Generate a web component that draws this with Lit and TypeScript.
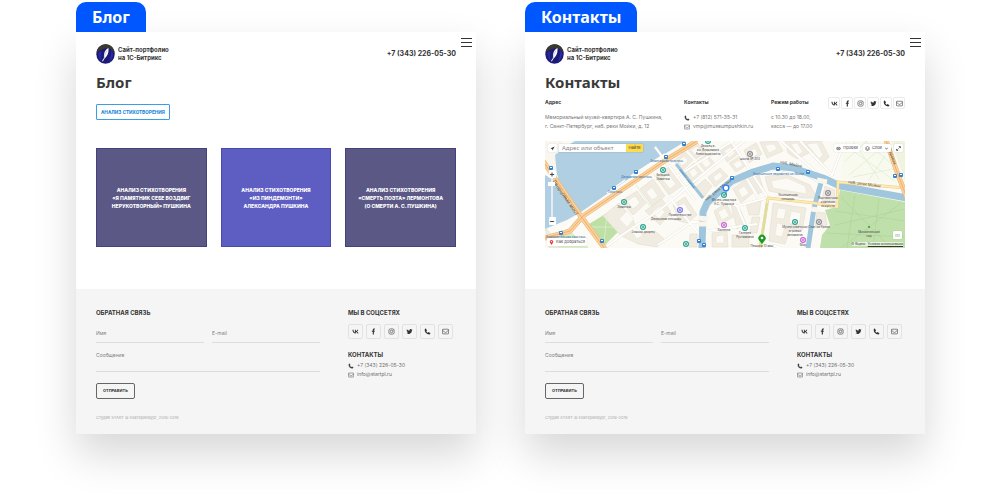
import { LitElement, html, svg, css } from "lit";
import { customElement, property } from "lit/decorators.js";

const glyphs: Record<string, unknown> = {
  vk: svg`<path fill="currentColor" d="M8.6 12.4C3.9 12.4 1.1 9.2 1 3.8h2.4c.1 4 1.8 5.600 3.200 6V3.800h2.200v3.400c1.400-.1 2.800-1.700 3.300-3.400h2.200c-.4 2-1.900 3.600-3 4.200 1.100.500 2.900 1.900 3.600 4.400h-2.500c-.5-1.600-1.800-2.800-3.600-3v3z"/>`,
  facebook: svg`<path fill="currentColor" d="M6.300 15V8.700H4.200V6.200h2.100V4.300C6.300 2.200 7.500 1 9.500 1c.9 0 1.800.1 1.800.1v2.200h-1.100c-1 0-1.300.6-1.300 1.300v1.600h2.300l-.4 2.500H8.900V15z"/>`,
  instagram: svg`<g fill="none" stroke="currentColor" stroke-width="1.300"><rect x="2" y="2" width="12" height="12" rx="3.500"/><circle cx="8" cy="8" r="2.900"/></g><circle cx="11.500" cy="4.500" r=".9" fill="currentColor"/>`,
  twitter: svg`<path fill="currentColor" d="M15 3.800a6 6 0 0 1-1.600.5 2.900 2.900 0 0 0 1.200-1.600 6 6 0 0 1-1.800.7 2.900 2.900 0 0 0-4.900 2.600A8 8 0 0 1 2 3a2.900 2.900 0 0 0 .9 3.800 3 3 0 0 1-1.300-.4c0 1.400 1 2.600 2.300 2.900a3 3 0 0 1-1.300 0 2.900 2.900 0 0 0 2.700 2A5.800 5.800 0 0 1 1 12.500a8.200 8.200 0 0 0 12.600-7.300A6 6 0 0 0 15 3.800z"/>`,
  phone: svg`<path fill="currentColor" d="M4.700 1.800 6.500 5c.2.400.1.800-.2 1.100L5.200 7.200c.8 1.500 2 2.700 3.600 3.600l1.100-1.100c.3-.3.700-.4 1.100-.2l3.200 1.800c.4.200.5.600.4 1-.4 1.500-1.500 2.300-3 2.300C6 14.400 1.600 10 1.500 4.500c0-1.500.8-2.700 2.200-3.100.4-.1.800 0 1 .4z"/>`,
  mail: svg`<g fill="none" stroke="currentColor" stroke-width="1.300"><rect x="1" y="2.800" width="14" height="10.600" rx="1.300"/><path d="m1.300 5.400 5.200 4.200c.9.700 2.100.7 3 0l5.200-4.200"/></g>`,
};

const icon = (name: string) =>
  html`<svg class="icon" viewBox="0 0 16 16" aria-hidden="true">${glyphs[name]}</svg>`;

const networks = [
  ["vk", "ВКонтакте"],
  ["facebook", "Facebook"],
  ["instagram", "Instagram"],
  ["twitter", "Twitter"],
  ["phone", "Телефон"],
  ["mail", "Почта"],
];

const base = css`
  :host {
    display: block;
    font-family: Inter, "Noto Sans", sans-serif;
    color: #333;
  }
  * {
    box-sizing: border-box;
  }
  h1,
  h2,
  h3,
  p {
    margin: 0;
  }
  a {
    color: inherit;
    text-decoration: none;
  }
  .icon {
    display: block;
    flex: none;
    width: 6px;
    height: 6px;
  }
  .heading {
    font-family: "Noto Sans", sans-serif;
    font-size: 15px;
    font-weight: 700;
    line-height: 20px;
    color: #3a3a3a;
  }
`;

@customElement("social-links")
class SocialLinks extends LitElement {
  @property({ type: Boolean, reflect: true }) compact = false;

  static styles = [
    base,
    css`
      .list {
        display: flex;
        gap: 3px;
      }
      .link {
        display: grid;
        place-items: center;
        width: 15px;
        height: 15px;
        border: 1px solid #e2e2e2;
        border-radius: 2px;
      }
      :host([compact]) .list {
        gap: 1px;
      }
      :host([compact]) .link {
        width: 12px;
        height: 12px;
        border-color: #ebebeb;
      }
      .icon {
        width: 7px;
        height: 7px;
      }
    `,
  ];

  render() {
    return html`<nav class="list" aria-label="Соцсети">
      ${networks.map(
        ([name, title]) => html`<a class="link" href="#" aria-label=${title}>${icon(name)}</a>`
      )}
    </nav>`;
  }
}

@customElement("site-header")
class SiteHeader extends LitElement {
  static styles = [
    base,
    css`
      :host {
        position: relative;
      }
      .bar {
        display: flex;
        align-items: center;
        justify-content: space-between;
        padding: 12px 20px 0;
      }
      .brand {
        display: flex;
        align-items: center;
        gap: 3px;
        font-size: 6px;
        font-weight: 700;
        line-height: 8px;
      }
      .logo {
        display: block;
        width: 19px;
        height: 20px;
      }
      .phone {
        font-size: 7px;
        font-weight: 700;
        line-height: 10px;
      }
      .menu {
        position: absolute;
        top: 6px;
        right: 4px;
        display: flex;
        flex-direction: column;
        gap: 3px;
        padding: 0;
        border: 0;
        background: none;
      }
      .line {
        width: 11px;
        height: 1px;
        background: #333;
      }
    `,
  ];

  render() {
    return html`<header class="bar">
        <a class="brand" href="#">
          <svg class="logo" viewBox="0 0 38 40" aria-hidden="true">
            <ellipse cx="19" cy="20" rx="18.500" ry="19.500" fill="#1b1a78" />
            <path d="M1 17C3 6 12 0 20 .5 30 1 37 9 37.500 19 33 11 27 7 18 9 11 11 6 13 1 17z" fill="#3b392c" />
            <path d="M31 11c5 8 3 19-5 25 3-8 5-16 5-25z" fill="#2d2da8" />
            <path d="M5 16c-1 8 2 15 6 18-1-7-1-13 0-19z" fill="#28289c" />
            <path d="M25 8c-5 2-8 7-9 13-.3 3 0 5 .5 6L12 34l1.500 1 4-6.500c3-2 6-7 7-11.500.5-3 .8-6 .5-9z" fill="#fff" />
            <path d="M22 13c-3 5-5 9-6 14" fill="none" stroke="#8c8fc7" />
          </svg>
          <span>Сайт-портфолио<br />на 1С-Битрикс</span>
        </a>
        <a class="phone" href="tel:+73432260530">+7 (343) 226-05-30</a>
      </header>
      <button class="menu" type="button" aria-label="Меню">
        <span class="line"></span><span class="line"></span><span class="line"></span>
      </button>`;
  }
}

@customElement("site-footer")
class SiteFooter extends LitElement {
  static styles = [
    base,
    css`
      .footer {
        display: grid;
        grid-template-columns: minmax(0, 1fr) 108px;
        column-gap: 28px;
        padding: 19px 20px 12px;
        background: #f5f5f5;
      }
      .title {
        font-size: 6px;
        font-weight: 700;
        line-height: 10px;
      }
      .form {
        display: grid;
        grid-template-columns: 1fr 1fr;
        column-gap: 8px;
        row-gap: 7px;
        margin-top: 10px;
      }
      .field {
        display: block;
        width: 100%;
        min-width: 0;
        height: 15px;
        padding: 0 0 4px;
        border: 0;
        border-bottom: 1px solid #ddd;
        border-radius: 0;
        background: none;
        font: 5px/10px Inter, sans-serif;
        color: #333;
        resize: none;
        outline: 0;
      }
      .field::placeholder {
        color: #808080;
        opacity: 1;
      }
      .wide {
        grid-column: 1 / -1;
      }
      .message {
        height: 22px;
        overflow: hidden;
      }
      .send {
        justify-self: start;
        height: 16px;
        margin-top: 4px;
        padding: 0 6px;
        border: 1px solid #666;
        border-radius: 2px;
        background: none;
        font: 700 4px/8px Inter, sans-serif;
        color: #333;
      }
      .copy {
        margin-top: 15px;
        font-size: 4px;
        line-height: 8px;
        color: #aaa;
      }
      .social {
        margin: 6px 0 11px;
      }
      .contacts {
        padding-top: 1px;
      }
      .row {
        display: flex;
        align-items: center;
        gap: 3px;
        font-size: 5px;
        line-height: 9px;
        color: #707070;
      }
      .row .icon {
        color: #444;
      }
    `,
  ];

  render() {
    return html`<footer class="footer">
      <section>
        <h2 class="title">ОБРАТНАЯ СВЯЗЬ</h2>
        <form class="form" @submit=${(e: Event) => e.preventDefault()}>
          <input class="field" type="text" placeholder="Имя" aria-label="Имя" />
          <input class="field" type="email" placeholder="E-mail" aria-label="E-mail" />
          <textarea class="field message wide" placeholder="Сообщение" aria-label="Сообщение"></textarea>
          <button class="send" type="submit">ОТПРАВИТЬ</button>
        </form>
        <p class="copy">Студия START © Екатеринбург, 2018-2019</p>
      </section>
      <section>
        <h2 class="title">МЫ В СОЦСЕТЯХ</h2>
        <social-links class="social"></social-links>
        <h2 class="title">КОНТАКТЫ</h2>
        <div class="contacts">
          <a class="row" href="tel:+73432260530">${icon("phone")}+7 (343) 226-05-30</a>
          <a class="row" href="mailto:info@startpl.ru">${icon("mail")}info@startpl.ru</a>
        </div>
      </section>
    </footer>`;
  }
}

interface Place {
  x: number;
  y: number;
  color: string;
  lines: string[];
}

const places: Place[] = [
  { x: 118, y: 29, color: "#2ba38f", lines: ["Большой", "Эрмитаж"] },
  { x: 79, y: 61, color: "#2ba38f", lines: ["Эрмитаж"] },
  { x: 98, y: 86, color: "#2ba38f", lines: ["Зимний дворец"] },
  { x: 163, y: 0, color: "#2ba38f", lines: ["Дворец в.", "кн. Владимира", "Александровича"] },
  { x: 205, y: 13, color: "#8b8b94", lines: ["школа № 204"] },
  { x: 179, y: 54, color: "#2ba38f", lines: ["Музей-квартира", "А.С. Пушкина"] },
  { x: 135, y: 69, color: "#7678e9", lines: ["Правительство"] },
  { x: 179, y: 84, color: "#c665d6", lines: ["Капелла"] },
  { x: 200, y: 87, color: "#2ba38f", lines: ["Галерея", "Рустамовой"] },
  { x: 141, y: 103, color: "#2ba38f", lines: [] },
  { x: 283, y: 52, color: "#8b8b94", lines: ["Выставочная", "компания", "искусств"] },
  { x: 250, y: 81, color: "#2ba38f", lines: ["Музей советских", "игровых", "автоматов"] },
  { x: 274, y: 81, color: "#8b8b94", lines: ["Спас на Крови"] },
  { x: 258, y: 99, color: "#c665d6", lines: ["Мир"] },
];

const stops = [
  [69, 47], [91, 31], [121, 16], [139, 3], [6, 27], [16, 92], [57, 100], [187, 37],
  [233, 28], [263, 31], [154, 100], [159, 104], [350, 35], [356, 34],
];

const blocks = [
  "58,75 74,62 88,79 94,92 110,90 120,99 112,106 93,103 75,94",
  "76,60 92,50 101,62 88,74", "95,48 108,38 120,55 107,65", "111,36 124,26 138,44 124,54",
  "100,70 117,58 126,71 115,84", "128,64 140,56 152,74 142,82 134,80",
  "129,20 140,11 148,19 138,29", "143,9 152,2 161,11 151,18", "139,31 149,22 158,33 149,43",
  "152,20 162,13 171,24 161,31", "151,46 160,38 167,45 159,56", "163,36 175,27 183,35 170,46",
  "175,9 187,3 193,13 182,21", "184,22 195,15 202,24 191,31", "199,9 211,2 217,13 204,22",
  "215,1 232,0 238,10 222,17", "240,0 254,0 264,12 252,18 243,12", "258,0 276,0 284,16 276,24",
  "188,48 200,39 208,52 196,62", "204,38 214,34 219,50 211,54",
  "220,36 238,32 265,44 272,57 258,57 224,50",
  "169,70 181,62 188,76 174,84", "186,64 196,70 201,83 192,88", "201,62 216,60 214,74 204,74",
  "207,76 215,76 212,92 205,92", "167,92 182,90 183,106 167,106", "187,94 204,94 204,106 187,106",
  "228,62 261,67 257,90 245,88 240,103 224,100", "0,86 4,107 14,107 10,98",
  "272,71 280,72 282,84 270,86", "145,93 152,93 152,106 144,106", "280,45 290,49 289,61 277,59",
];

@customElement("city-map")
class CityMap extends LitElement {
  static styles = [
    base,
    css`
      :host {
        position: relative;
        overflow: hidden;
      }
      .canvas {
        display: block;
        width: 100%;
        height: auto;
      }
      .label {
        font-size: 3px;
        fill: #44444c;
        text-anchor: middle;
      }
      .street {
        font-size: 4px;
        fill: #555;
      }
      .bridge {
        font-size: 5px;
        fill: #6b5540;
      }
      .water-name {
        font-size: 3px;
        fill: #2a6cb0;
      }
      .box {
        display: flex;
        align-items: center;
        justify-content: center;
        gap: 2px;
        min-width: 8px;
        height: 8px;
        padding: 0 2px;
        border: 0;
        border-radius: 1px;
        background: #fff;
        box-shadow: 0 0 1px rgba(0, 0, 0, 0.3);
        font: 4px/8px Inter, sans-serif;
        color: #444;
      }
      .box .icon {
        width: 5px;
        height: 5px;
      }
      .search-bar {
        position: absolute;
        top: 3px;
        left: 3px;
        display: flex;
        gap: 2px;
      }
      .search {
        display: flex;
        width: 84px;
        height: 8px;
        box-shadow: 0 0 1px rgba(0, 0, 0, 0.3);
      }
      .query {
        flex: 1;
        min-width: 0;
        padding: 0 3px;
        border: 0;
        background: #fff;
        font: 6px/8px "Noto Sans", sans-serif;
        outline: 0;
      }
      .query::placeholder {
        color: #888;
        opacity: 1;
      }
      .find {
        width: 17px;
        padding: 0;
        border: 0;
        background: #ffdb4d;
        font: 4px/8px Inter, sans-serif;
        color: #333;
      }
      .tools {
        position: absolute;
        top: 3px;
        right: 2px;
        display: flex;
        gap: 3px;
      }
      .zoom {
        position: absolute;
        top: 29px;
        left: 3px;
        display: flex;
        flex-direction: column;
        align-items: center;
        width: 8px;
      }
      .step {
        width: 7px;
        height: 8px;
        padding: 0;
        border: 0;
        border-radius: 1px;
        background: #fff;
        font: 700 8px/8px Inter, sans-serif;
        color: #444;
      }
      .track {
        width: 2px;
        height: 39px;
        background: #e3edf3;
      }
      .knob {
        width: 7px;
        height: 4px;
        margin: 4px 0 0 -3px;
        background: #fff;
      }
      .route {
        position: absolute;
        bottom: 2px;
        left: 2px;
      }
      .ruler {
        position: absolute;
        right: 3px;
        bottom: 9px;
      }
      .credit {
        position: absolute;
        right: 2px;
        bottom: 2px;
        display: flex;
        gap: 2px;
        font-size: 3px;
        line-height: 4px;
        background: rgba(255, 255, 255, 0.6);
        color: #333;
      }
      .terms {
        text-decoration: underline;
      }
    `,
  ];

  render() {
    const streets =
      "m131 36 88-56M116 68 152 38 184 12 199 0M56 110l18-14 42-28M186 0l37 57M164 64l26-22 24-12 18-2 30 6 14 8M222 57l-30 8-12 -5M192 65l12 28M113 104l34-23h14M234-2l40 36M124 56l34 42M162 90l50-7M226 104l10 3M150 60 110 6M255 0l32 34-12 8M287 34 300 0M201 36l12 20";
    const yellow = "M215 107 223 57l46 5 23 4 1-25 67 6";
    const avenue = "M152 0 121 19 38 75 25 90 0 97M-2 20l37 54 25 34M341-1l11 32 10 26";
    return html`<svg class="canvas" viewBox="0 0 360 107" role="img" aria-label="Карта">
        <rect width="360" height="107" fill="#fcfaf5" />
        <path d="M298 0h42l14 44-58-7z" fill="#f8faf0" />
        <path d="m346 0 14 40V0z" fill="#eff3e0" />
        <path d="m295 49 65 12v46h-85l2-13 8-10-5-15 12-3z" fill="#bfe0ab" />
        <path d="m62 72 15 15-18 18-15-22z" fill="#bfe0a5" />
        <path d="m12 97 14-6 18 16H14z" fill="#dcebc8" />
        <g fill="#f1ece1" stroke="#e0d9ca" stroke-width=".5">${blocks.map((b) => svg`<polygon points=${b} />`)}</g>
        <g fill="#fcfaf5" stroke="#ddd6c6" stroke-width=".3">
          <path d="m74 78 8-8 7 8-7 8z" /><path d="m84 87 5-3 9 10-6 4z" /><path d="m226 40 16-3 18 8 2 8-34-6z" />
          <path d="m82 60 8-5 5 7-7 6zM101 51l6-5 6 9-6 4zM117 38l6-5 8 10-6 5zM107 71l8-6 5 6-6 7zM132 66l7-4 7 10-5 4z" />
          <path d="m133 20 6-5 4 5-6 5zM146 9l6-4 5 6-6 4zM144 31l5-4 4 5-5 5zM156 21l6-4 4 6-5 4zM168 36l7-5 3 4-7 6zM179 10l7-4 4 6-6 5zM188 23l6-4 4 5-6 4zM204 11l6-4 3 6-6 4zM220 4l9-1 3 5-8 4zM246 3l6-1 6 9-5 3zM262 3l10-1 6 12-4 4z" />
          <path d="m193 49 6-4 5 7-7 5zM173 71l7-4 4 8-7 4zM233 67l8 1-2 10-8-1zM246 70l10 2-2 12-10-2zM232 82l8 2-3 12-7-2zM171 95l8-1v8h-8z" />
        </g>
        <path d="M0 34 10 40 22 26 10 12 30 0h111l-23 14-82 57L22 79 0 88z" fill="#b0cfe2" />
        <path d="M0 0h17l5 10-2 22-8 2L0 20z" fill="#f8f6ee" />
        <path d="M10 14 20 6l18-6h16L30 60 12 34z" fill="#b0cfe2" />
        <path d=${streets} fill="none" stroke="#e4dfd0" stroke-width="2.600" />
        <path d=${streets} fill="none" stroke="#fff" stroke-width="2" />
        <g fill="none" stroke="#e0eed3" stroke-width=".8">
          <path d="m300 4 50 36M320 0l28 24M340 4l-36 30M322 0l-22 20M348 28l-40 8M308 0l26 38M340 15l-16 24M91 44l15 23M108 32l16 20M46 86l28 0M62 74l-3 27" />
        </g>
        <g fill="none" stroke="#aed296" stroke-width=".6">
          <path d="m290 70 70 10M290 84l70-16M282 92l78 4M310 54l-8 53M334 58l-6 49M296 56l50 51M356 62l-60 45" />
        </g>
        <g fill="none" stroke="#9fc6dd" stroke-linejoin="round">
          <path d="m131 23 27 34" stroke-width="3" />
          <path d="M362 57 295 45 278 37 248 27 228 25 208 31 187 40 175 50 162 62 158 71 157 107" stroke-width="7" />
          <path d="m277 38-8 29-6 40" stroke-width="5" />
        </g>
        <path d="m153 77 10 1M153 83l9 0M272 39l10 2M266 68l7 1" stroke="#faf6ee" stroke-width="5" />
        <g fill="none" stroke-linejoin="round">
          <path d=${yellow} stroke="#edcf8c" stroke-width="3" />
          <path d=${yellow} stroke="#fbeab4" stroke-width="2" />
          <path d="m216 104 6-42" stroke="#d5dfa0" stroke-width="2" />
          <path d=${avenue} stroke="#eab274" stroke-width="5" />
          <path d=${avenue} stroke="#fbd29b" stroke-width="4" />
          <path d=${avenue} stroke="#e9a766" stroke-width=".8" />
        </g>
        <path d="m86 35 34-22M62 52l18-13M18 89l14-13" stroke="#fff" stroke-width="1.500" />
        <text class="bridge" transform="translate(7 40) rotate(55)">Дворцовый мост</text>
        <text class="street" transform="translate(161 60) rotate(-38)">наб. реки Мойки</text>
        <text class="street" transform="translate(303 42) rotate(8)">наб. реки Мойки</text>
        <text class="street" transform="translate(235 22) rotate(12)">наб. Мойки</text>
        <text class="street" transform="translate(343 8) rotate(70)">Садовая</text>
        <text class="label" x="121" y="79">Дворцовая площадь</text>
        <text class="label" x="243" y="55">Конюшенная</text>
        <text class="label" x="243" y="59">площадь</text>
        <text class="water-name" x="76" y="37">Дворцовая пристань</text>
        <text class="water-name" x="63" y="52">Пристань</text>
        <text class="water-name" x="105" y="21">Эрмитажная пристань</text>
        <text class="water-name" x="1" y="97">Адмиралтейская пристань</text>
        <text class="water-name" x="208" y="34">Конюшенное ведомство на Мойке</text>
        <text class="water-name" transform="translate(134 29) rotate(52)">Зимняя канавка</text>
        ${stops.map(
          ([x, y]) => svg`<rect x=${x - 2} y=${y - 2} width="4" height="4" rx="1" fill="#3582cf" /><rect x=${x - 1} y=${y - 1} width="2" height="1" fill="#fff" />`
        )}
        ${places.map(
          (p) => svg`<circle cx=${p.x} cy=${p.y} r="2.400" fill="#fff" stroke=${p.color} stroke-width="1.200" /><circle cx=${p.x} cy=${p.y} r="1" fill=${p.color} />
            ${p.lines.map((t, i) => svg`<text class="label" x=${p.x} y=${p.y + 6 + i * 4}>${t}</text>`)}`
        )}
        <circle cx="324" cy="86" r="1" fill="#3f8f3a" />
        <text class="label" x="324" y="92">Михайловский</text>
        <text class="label" x="324" y="96">сад</text>
        <path d="M181 54v-6" stroke="#2d83e4" />
        <circle cx="181" cy="47" r="2.800" fill="#fff" stroke="#2d83f4" stroke-width="1.300" />
        <path d="m217 103-2.400-3a3.600 3.600 0 1 1 4.800 0z" fill="#1a9b22" />
        <circle cx="217" cy="97" r="1.300" fill="#fff" />
        <text class="label" x="217" y="106">Пешком 10 мин</text>
      </svg>
      <div class="search-bar">
        <button class="box" type="button" aria-label="Моё местоположение">
          <svg class="icon" viewBox="0 0 12 12"><path d="M11 1 1 6l4 1 1 4z" fill="#333" /></svg>
        </button>
        <form class="search" @submit=${(e: Event) => e.preventDefault()}>
          <input class="query" type="text" placeholder="Адрес или объект" aria-label="Адрес или объект" />
          <button class="find" type="submit">Найти</button>
        </form>
      </div>
      <div class="tools">
        <button class="box" type="button">
          <svg class="icon" viewBox="0 0 12 12"><path d="M1 6a5 3 0 0 1 10 0 5 3 0 0 1-10 0zm2 0h6" fill="none" stroke="#444" stroke-width="1.500" /></svg>Пробки
        </button>
        <button class="box" type="button">
          <svg class="icon" viewBox="0 0 12 12"><path d="m6 1 5 4-5 3-5-3zM1 8l5 3 5-3" fill="none" stroke="#444" stroke-width="1.500" /></svg>Слои
          <svg class="icon" viewBox="0 0 12 12"><path d="m3 4 3 4 3-4" fill="none" stroke="#444" stroke-width="1.500" /></svg>
        </button>
        <button class="box" type="button" aria-label="На весь экран">
          <svg class="icon" viewBox="0 0 12 12"><path d="M7 1h4v4zM1 7v4h4zM3 9l6-6" fill="#333" stroke="#333" /></svg>
        </button>
      </div>
      <div class="zoom">
        <button class="step" type="button" aria-label="Приблизить">+</button>
        <div class="track"><div class="knob"></div></div>
        <button class="step" type="button" aria-label="Отдалить">−</button>
      </div>
      <button class="box route" type="button">
        <svg class="icon" viewBox="0 0 12 12"><path d="M6 12 3 7a4 4 0 1 1 6 0z" fill="#e33" /><circle cx="6" cy="4" r="1.500" fill="#fff" /></svg>Как добраться
      </button>
      <button class="box ruler" type="button" aria-label="Линейка">
        <svg class="icon" viewBox="0 0 12 12"><path d="M1 4h10v4H1zM4 4v2M6 4v2M8 4v2" fill="none" stroke="#999" /></svg>
      </button>
      <div class="credit"><span>© Яндекс</span><a class="terms" href="#">Условия использования</a></div>`;
  }
}

@customElement("blog-page")
class BlogPage extends LitElement {
  static styles = [
    base,
    css`
      .content {
        padding: 8px 20px 42px;
      }
      .top {
        display: flex;
        flex-direction: column;
        align-items: flex-start;
      }
      .tag {
        margin-top: 12px;
        padding: 0 4px;
        border: 1px solid #3c9de5;
        border-radius: 1px;
        font-family: Roboto, sans-serif;
        font-size: 5px;
        font-weight: 700;
        line-height: 14px;
        color: #1583d8;
      }
      .cards {
        display: grid;
        grid-template-columns: repeat(3, 1fr);
        gap: 14px;
        margin-top: 28px;
      }
      .card {
        display: grid;
        place-items: center;
        min-height: 99px;
        border: 1px solid #44427c;
        background: #5b5886;
        font-size: 5px;
        font-weight: 800;
        line-height: 8px;
        text-align: center;
        white-space: nowrap;
        color: #fff;
      }
      .active {
        border-color: #4a49ac;
        background: #5e5dc1;
      }
    `,
  ];

  render() {
    return html`<site-header></site-header>
      <main class="content">
        <div class="top">
          <h1 class="heading">Блог</h1>
          <a class="tag" href="#">АНАЛИЗ СТИХОТВОРЕНИЯ</a>
        </div>
        <div class="cards">
          <a class="card" href="#"><span>АНАЛИЗ СТИХОТВОРЕНИЯ<br />«Я ПАМЯТНИК СЕБЕ ВОЗДВИГ<br />НЕРУКОТВОРНЫЙ» ПУШКИНА</span></a>
          <a class="card active" href="#"><span>АНАЛИЗ СТИХОТВОРЕНИЯ<br />«ИЗ ПИНДЕМОНТИ»<br />АЛЕКСАНДРА ПУШКИНА</span></a>
          <a class="card" href="#"><span>АНАЛИЗ СТИХОТВОРЕНИЯ<br />«СМЕРТЬ ПОЭТА» ЛЕРМОНТОВА<br />(О СМЕРТИ А. С. ПУШКИНА)</span></a>
        </div>
      </main>
      <site-footer></site-footer>`;
  }
}

@customElement("contacts-page")
class ContactsPage extends LitElement {
  static styles = [
    base,
    css`
      .content {
        padding: 8px 20px 41px;
      }
      .info {
        display: grid;
        grid-template-columns: 139fr 87fr 57fr auto;
        margin-top: 5px;
        font-size: 5px;
        line-height: 9px;
        color: #777;
        white-space: nowrap;
      }
      .name {
        margin-bottom: 6px;
        font-size: 5px;
        font-weight: 700;
        line-height: 10px;
        color: #333;
      }
      .row {
        display: flex;
        align-items: center;
        gap: 3px;
      }
      .row .icon {
        color: #444;
      }
      .map {
        margin-top: 10px;
      }
    `,
  ];

  render() {
    return html`<site-header></site-header>
      <main class="content">
        <h1 class="heading">Контакты</h1>
        <div class="info">
          <section>
            <h3 class="name">Адрес</h3>
            <p>Мемориальный музей-квартира А. С. Пушкина,<br />г. Санкт-Петербург, наб. реки Мойки, д. 12</p>
          </section>
          <section>
            <h3 class="name">Контакты</h3>
            <a class="row" href="tel:+78125713531">${icon("phone")}+7 (812) 571-35-31</a>
            <a class="row" href="mailto:vmp@museumpushkin.ru">${icon("mail")}vmp@museumpushkin.ru</a>
          </section>
          <section>
            <h3 class="name">Режим работы</h3>
            <p>с 10.30 до 18.00,<br />касса — до 17.00</p>
          </section>
          <social-links compact></social-links>
        </div>
        <city-map class="map"></city-map>
      </main>
      <site-footer></site-footer>`;
  }
}

@customElement("app-root")
class AppRoot extends LitElement {
  static styles = [
    base,
    css`
      :host {
        min-height: 100vh;
        background: #fff;
      }
      .stage {
        display: grid;
        grid-template-columns: repeat(2, minmax(0, 1fr));
        gap: 49px;
        padding: 2px 75px 65px 76px;
      }
      .tab {
        display: inline-block;
        padding: 0 16px;
        border-radius: 10px 10px 0 0;
        background: #0057ff;
        font-family: "Noto Sans", sans-serif;
        font-size: 16px;
        font-weight: 700;
        line-height: 30px;
        color: #fff;
        vertical-align: top;
      }
      .sheet {
        background: #fff;
        box-shadow: 0 20px 40px rgba(0, 0, 0, 0.16);
      }
    `,
  ];

  render() {
    return html`<div class="stage">
      <article>
        <span class="tab">Блог</span>
        <div class="sheet"><blog-page></blog-page></div>
      </article>
      <article>
        <span class="tab">Контакты</span>
        <div class="sheet"><contacts-page></contacts-page></div>
      </article>
    </div>`;
  }
}
